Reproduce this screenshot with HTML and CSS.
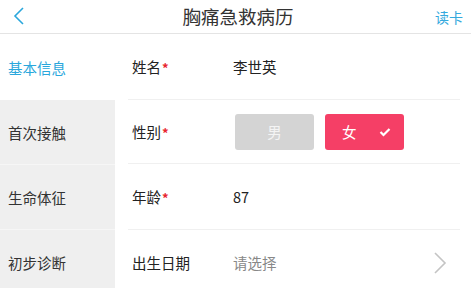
FILE: index.html
```html
<!DOCTYPE html>
<html>
<head>
<meta charset="utf-8">
<link rel="stylesheet" href="styles.css">
</head>
<body>
<div class="app">
  <header class="topbar">
    <span class="back"><svg width="12" height="18" viewBox="0 0 12 18"><path d="M10 1 L2 9 L10 17" fill="none" stroke="#2aa7dc" stroke-width="1.6"/></svg></span>
    <span class="title">胸痛急救病历</span>
    <span class="read">读卡</span>
  </header>
  <div class="main">
    <nav class="side">
      <div class="side-item active">基本信息</div>
      <div class="side-item">首次接触</div>
      <div class="side-item">生命体征</div>
      <div class="side-item">初步诊断</div>
    </nav>
    <section class="form">
      <div class="row tall">
        <div class="label">姓名<span class="req">*</span></div>
        <div class="value">李世英</div>
      </div>
      <div class="row">
        <div class="label">性别<span class="req">*</span></div>
        <div class="btns">
          <span class="btn off">男</span>
          <span class="btn on">女<svg class="check" width="12" height="10" viewBox="0 0 12 10"><path d="M1.5 5 L4.5 8 L10.5 2" fill="none" stroke="#fff" stroke-width="2.2"/></svg></span>
        </div>
      </div>
      <div class="row tall">
        <div class="label">年龄<span class="req">*</span></div>
        <div class="value">87</div>
      </div>
      <div class="row last">
        <div class="label">出生日期</div>
        <div class="value placeholder">请选择</div>
        <span class="arrow"><svg width="14" height="24" viewBox="0 0 14 24"><path d="M2 2 L12 12 L2 22" fill="none" stroke="#c4c4c4" stroke-width="1.6"/></svg></span>
      </div>
    </section>
  </div>
</div>
</body>
</html>
```
FILE: styles.css
```css
* { box-sizing: border-box; }
body {
  margin: 0;
  background: #fff;
  font-family: "Noto Sans CJK SC", "Noto Sans", sans-serif;
}
.app { width: 471px; height: 288px; overflow: hidden; }
.topbar {
  height: 34px;
  border-bottom: 1px solid #e4e4e4;
  display: grid;
  grid-template-columns: 1fr auto 1fr;
  align-items: center;
  padding: 0 8px 0 13px;
}
.back { display: flex; align-items: center; margin-top: -2px; }
.title { font-size: 18.5px; color: #333; margin-left: 0; margin-top: -2px; }
.read { font-size: 14px; color: #35a9dd; text-align: right; }
.main { display: flex; }
.side { width: 115px; background: #efefef; }
.side-item {
  height: 65px;
  display: flex;
  align-items: center;
  padding-left: 8px;
  font-size: 14.5px;
  color: #333;
  border-bottom: 1px solid #f6f6f6;
}
.side-item.active { background: #fff; color: #2aa7dc; border-bottom: none; height: 66px; }
.form { flex: 1; padding-left: 13px; padding-right: 11px; }
.row {
  height: 64px;
  display: flex;
  align-items: center;
  border-bottom: 1px solid #f0f0f0;
  position: relative;
}
.row.tall { height: 66px; }
.row.last { border-bottom: none; }
.label { width: 105px; padding-left: 4px; font-size: 14.5px; color: #222; }
.req { color: #e8262e; font-weight: bold; font-size: 13px; margin-left: 1px; }
.value { font-size: 14.5px; color: #222; }
.value.placeholder { color: #888; }
.btns { display: flex; gap: 11px; margin-left: 2px; }
.btn {
  width: 79px;
  height: 36px;
  border-radius: 3px;
  display: flex;
  align-items: center;
  justify-content: center;
  font-size: 14.5px;
}
.btn.off { background: #d4d4d4; color: #f4f4f4; }
.btn.on { background: #f53f66; color: #fff; justify-content: flex-start; padding-left: 17px; gap: 22px; }
.check { margin-top: 1px; }
.arrow { position: absolute; right: 13px; top: 21px; }
```
